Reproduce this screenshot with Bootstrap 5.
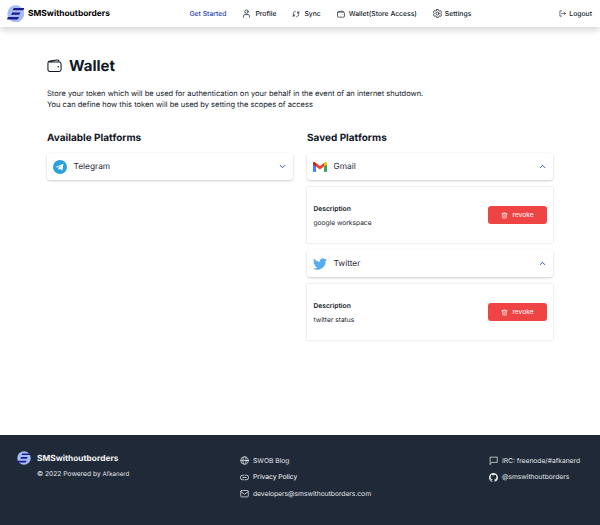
<!DOCTYPE html>
<html lang="en">
<head>
<meta charset="utf-8">
<meta name="viewport" content="width=device-width, initial-scale=1">
<title>SMSwithoutborders - Wallet</title>
<link href="https://cdn.jsdelivr.net/npm/bootstrap@5.3.0/dist/css/bootstrap.min.css" rel="stylesheet">
<style>
body{font-family:Inter,"Liberation Sans",sans-serif;font-size:7px;line-height:10px;color:#111827;background:#fff;height:525px;overflow:hidden;text-rendering:geometricPrecision}
svg{display:block;flex:none}
.ico{fill:none;stroke:currentColor;stroke-width:2;stroke-linecap:round;stroke-linejoin:round}
.topbar{height:27px;padding:0 8px 0 6.5px;box-shadow:0 4px 6px -1px rgba(0,0,0,.1),0 2px 10px rgba(0,0,0,.09)}
.brand-name{font-weight:700;font-size:8.4px;color:#000;margin-left:4px;width:161.5px}
.topbar a{color:#111827;font-weight:500;font-size:6.8px;text-decoration:none;white-space:nowrap}
.topbar a + a{margin-left:16px}
.topbar a.current{color:#1e40af}
.page-body{height:408px;padding:29px 47px 0}
.page-title{font-size:15px;line-height:18px;font-weight:700;margin:0 0 0 7px;padding-top:1px}
.intro{font-size:7.52px;line-height:11.67px;margin:12.5px 0 0;white-space:nowrap}
.platforms{display:grid;grid-template-columns:246px 246px;column-gap:14px;margin-top:21.200px}
.platforms h2{font-size:10px;line-height:13px;font-weight:700;margin:0 0 8.300px}
.platform-head{height:27px;padding:0 7px 0 6px;border-radius:3px;font-size:8.33px;color:#1f2937;box-shadow:0 1px 3px rgba(0,0,0,.13),0 1px 2px rgba(0,0,0,.08)}
.platform-head .label{margin-left:6.5px;padding-top:1px}
.platform-head .chev{color:#1e40af}
.detail{height:56px;margin:7px 0;padding:0 6px 0 6.5px;box-shadow:0 0 2px rgba(0,0,0,.2)}
.detail h3{font-size:6.7px;line-height:10px;font-weight:600;margin:2px 0 4px}
.detail p{font-size:6.65px;line-height:10px;margin:0}
.revoke{width:59px;height:18px;border:0;border-radius:3px;background:#ef4444;color:#fff;font-size:6.7px;padding:0;gap:4px}
.site-footer{height:90px;background:#1f2937;color:#e5e7eb;font-size:6.7px;padding:16px 20px 0 16.5px}
.foot-name{font-size:8.33px;font-weight:700;line-height:14px;color:#f3f4f6;padding-top:1px}
.foot-list{line-height:10px;gap:6.5px;padding-top:4.500px}
.foot-list div{gap:4px;white-space:nowrap}
</style>
</head>
<body>
<svg width="0" height="0" class="position-absolute">
<defs>
<symbol id="logo" viewBox="0 0 17 17"><circle cx="8.500" cy="8.500" r="8.200" fill="#a5bdf3"/><path d="M6.500 3H17l-1 2H5.500zM5 7.300h8l-1 2.200H4zM.8 11.700h11l-1.500 2.400H0z" fill="#1e1b8f"/></symbol>
<symbol id="wallet" viewBox="0 0 24 24"><path d="M1.500 8C1.500 6 2.500 5.200 4.500 5L16 3.300c2-.3 3 .5 3 2V6M4 6.500h15.500c2 0 3 1 3 3v9c0 2-1 3-3 3h-15c-2 0-3-1-3-3V8"/><circle cx="18" cy="14" r="1.200" fill="currentColor" stroke="none"/></symbol>
<symbol id="trash" viewBox="0 0 24 24"><path d="M3 6h18M8 6V3h8v3M5 6l1 15h12l1-15M10 10v7M14 10v7"/></symbol>
<symbol id="up" viewBox="0 0 12 12"><path d="M2 8l4-4 4 4"/></symbol>
</defs>
</svg>
<nav class="topbar d-flex align-items-center position-relative">
<svg width="17.500" height="17.500"><use href="#logo"/></svg>
<span class="brand-name">SMSwithoutborders</span>
<a class="current" href="#">Get Started</a>
<a class="d-flex align-items-center" href="#"><svg class="ico me-1" width="9" height="9" viewBox="0 0 24 24"><circle cx="12" cy="7" r="4.500"/><path d="M4 22v-2c0-4 2-5 4-5h8c2 0 4 1 4 5v2"/></svg>Profile</a>
<a class="d-flex align-items-center" href="#"><svg class="ico me-1" width="8" height="8" viewBox="0 0 24 24"><path d="M10 4C3 5 2 13 6 18M2 18h5v-4M14 20c7-1 8-9 4-14M22 6h-5v4"/></svg>Sync</a>
<a class="d-flex align-items-center" href="#"><svg class="ico me-1" width="8" height="8"><use href="#wallet"/></svg>Wallet(Store Access)</a>
<a class="d-flex align-items-center" href="#"><svg class="ico" style="margin-right:3px" width="9" height="9" viewBox="0 0 24 24"><path d="M9.500 1.500h5l1 3 2 1 3-1 2.500 4-2 2.500v2l2 2.500-2.500 4-3-1-2 1-1 3h-5l-1-3-2-1-3 1-2.500-4 2-2.500v-2l-2-2.500 2.500-4 3 1 2-1z"/><circle cx="12" cy="12" r="4"/></svg>Settings</a>
<a class="d-flex align-items-center ms-auto" href="#"><svg class="ico" style="margin-right:3px" width="7" height="7" viewBox="0 0 24 24"><path d="M9 3H3v18h6M9 12h13M17 7l5 5-5 5"/></svg>Logout</a>
</nav>
<main class="page-body">
<div class="d-flex align-items-center"><svg class="ico" style="stroke-width:1.7" width="15" height="15"><use href="#wallet"/></svg><h1 class="page-title">Wallet</h1></div>
<p class="intro">Store your token which will be used for authentication on your behalf in the event of an internet shutdown.<br>You can define how this token will be used by setting the scopes of access</p>
<div class="platforms">
<section>
<h2>Available Platforms</h2>
<div class="platform-head d-flex align-items-center"><svg width="14" height="14" viewBox="0 0 24 24"><circle cx="12" cy="12" r="12" fill="#2aa1dd"/><path d="M4.500 12L18 6.500 16 18l-4.500-3-2 2-.5-3.500 6-5-7.500 4.500z" fill="#fff"/></svg><span class="label">Telegram</span><svg class="ico chev ms-auto" style="stroke-width:1.5;transform:scaleY(-1)" width="7" height="7"><use href="#up"/></svg></div>
</section>
<section>
<h2>Saved Platforms</h2>
<div class="platform-head d-flex align-items-center"><svg width="14" height="10" viewBox="0 0 28 20"><path d="M0 4h6v16H2q-2 0-2-2z" fill="#4285f4"/><path d="M22 4h6v14q0 2-2 2h-4z" fill="#34a853"/><path d="M6 2l8 6 8-6v7l-8 6-8-6z" fill="#ea4335"/><path d="M0 5V3c0-3 3-4 6-1v7z" fill="#c5221f"/><path d="M28 5V3c0-3-3-4-6-1v7z" fill="#fbbc04"/></svg><span class="label">Gmail</span><svg class="ico chev ms-auto" style="stroke-width:1.5" width="7" height="7"><use href="#up"/></svg></div>
<div class="detail d-flex align-items-center justify-content-between"><div><h3>Description</h3><p>google workspace</p></div><button class="revoke d-flex align-items-center justify-content-center"><svg class="ico" width="7" height="7"><use href="#trash"/></svg>revoke</button></div>
<div class="platform-head d-flex align-items-center"><svg width="14" height="14" viewBox="0 0 24 24" fill="#55acee"><path d="M24 4.600a10 10 0 0 1-2.800.8 5 5 0 0 0 2.100-2.700 10 10 0 0 1-3.100 1.200 4.900 4.900 0 0 0-8.400 4.500A14 14 0 0 1 1.700 3.200a4.900 4.900 0 0 0 1.500 6.500 5 5 0 0 1-2.200-.6 4.900 4.900 0 0 0 3.900 4.900 5 5 0 0 1-2.200.1 4.900 4.900 0 0 0 4.600 3.400A10 10 0 0 1 0 19.500 14 14 0 0 0 21.500 7.100 10 10 0 0 0 24 4.600z"/></svg><span class="label">Twitter</span><svg class="ico chev ms-auto" style="stroke-width:1.5" width="7" height="7"><use href="#up"/></svg></div>
<div class="detail d-flex align-items-center justify-content-between"><div><h3>Description</h3><p>twitter status</p></div><button class="revoke d-flex align-items-center justify-content-center"><svg class="ico" width="7" height="7"><use href="#trash"/></svg>revoke</button></div>
</section>
</div>
</main>
<footer class="site-footer d-flex">
<div class="d-flex" style="width:223.5px"><svg style="margin-right:6.5px" width="14" height="14"><use href="#logo"/></svg><div><div class="foot-name">SMSwithoutborders</div><div style="margin-top:3px">© 2022 Powered by <span style="font-size:6.2px">Afkanerd</span></div></div></div>
<div class="foot-list d-flex flex-column">
<div class="d-flex align-items-center"><svg class="ico" width="9" height="9" viewBox="0 0 24 24"><circle cx="12" cy="12" r="10"/><ellipse cx="12" cy="12" rx="4.500" ry="10"/><path d="M2 12h20"/></svg>SWOB Blog</div>
<div class="d-flex align-items-center text-white"><svg class="ico" width="9" height="9" viewBox="0 0 24 24"><path d="M10 6H7a6 6 0 0 0 0 12h3M14 6h3a6 6 0 0 1 0 12h-3M8 12h8"/></svg><span>Privacy Policy</span></div>
<div class="d-flex align-items-center"><svg class="ico" width="9" height="9" viewBox="0 0 24 24"><rect x="2" y="4" width="20" height="17" rx="2"/><path d="M2 7l10 7 10-7"/></svg>developers@smswithoutborders.com</div>
</div>
<div class="foot-list d-flex flex-column ms-auto">
<div class="d-flex align-items-center"><svg class="ico" width="9" height="9" viewBox="0 0 24 24"><path d="M3 22V3h19v14H8z"/></svg>IRC: freenode/#afkanerd</div>
<div class="d-flex align-items-center"><svg width="9" height="9" viewBox="0 0 16 16" fill="currentColor"><path d="M8 0C3.580 0 0 3.580 0 8c0 3.540 2.290 6.530 5.470 7.590.4.070.55-.17.55-.38v-1.490c-2.010.37-2.530-.49-2.690-.94-.09-.23-.48-.94-.82-1.130-.28-.15-.68-.52-.01-.53.63-.01 1.080.58 1.230.82.72 1.210 1.870.87 2.330.66.070-.52.28-.87.51-1.070-1.780-.2-3.640-.89-3.640-3.950 0-.87.31-1.590.82-2.150-.08-.2-.36-1.020.08-2.120 0 0 .67-.21 2.200.82a7.500 7.500 0 0 1 4 0c1.530-1.040 2.200-.82 2.200-.82.44 1.100.16 1.920.08 2.120.51.56.82 1.270.82 2.150 0 3.070-1.870 3.750-3.650 3.950.29.25.54.73.54 1.480v2.190c0 .21.15.46.55.38A8 8 0 0 0 16 8c0-4.420-3.580-8-8-8z"/></svg>@smswithoutborders</div>
</div>
</footer>
<script src="https://cdn.jsdelivr.net/npm/bootstrap@5.3.0/dist/js/bootstrap.bundle.min.js"></script>
</body>
</html>
